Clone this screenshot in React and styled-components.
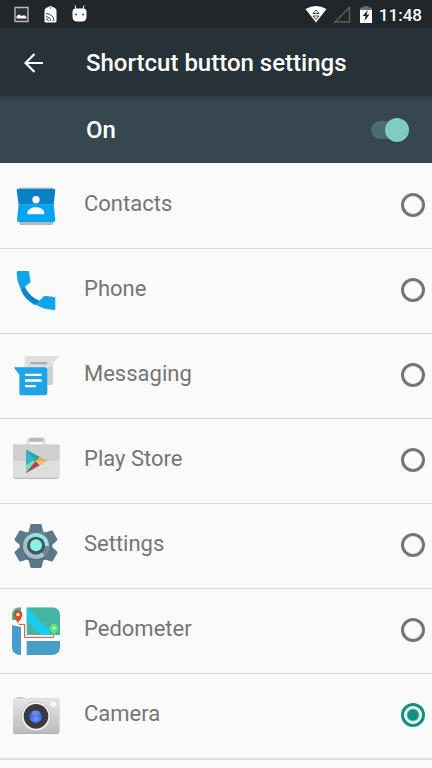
import { useState } from "react";
import styled, { createGlobalStyle } from "styled-components";

const ContactsIcon = () => (
    <svg viewBox="36 36 144 144" aria-hidden="true">
        <path d="M60 52H156L162 60H54Z" fill="#c9d2d6" />
        <path d="M58 150H160V160Q160 165 155 165H63Q58 165 58 160Z" fill="#b4b8ba" />
        <path d="M54 56H162Q166 57 166 62L161 104H56L50 62Q50 57 54 56Z" fill="#0b81c5" />
        <path d="M56 104H161L166 150Q166 156 160 156H57Q51 156 51 150Z" fill="#03a5f0" />
        <circle cx="108" cy="89" r="11" fill="#fff" />
        <path d="M82 133V128C84 106 131 106 133 128V133Z" fill="#f2fbff" />
    </svg>
)

const PhoneIcon = () => (
    <svg viewBox="36 36 144 144" aria-hidden="true">
        <path d="M54 48H84Q87 48 87 51L92 81L74 96C84 115 97 128 118 137L133 122L163 126Q166 126 166 130V162Q166 165 162 165C100 163 50 112 50 52Q50 48 54 48Z" fill="#0fa4ec" />
        <path d="M74 95C84 115 97 128 118 137L104 150C85 140 71 125 63 106Z" fill="#0b84c8" />
    </svg>
)

const MessagingIcon = () => (
    <svg viewBox="36 36 144 144" aria-hidden="true">
        <path d="M82 48H176L159 72V128Q159 135 152 135H82Q74 135 74 128V56Q74 48 82 48Z" fill="#dfdfdf" />
        <path d="M142 85L159 78V128Q159 135 152 135H142Z" fill="#cfcfcf" />
        <path d="M91 66H141V73H91Z" fill="#adadad" />
        <path d="M41 82H134Q142 82 142 90V158Q142 166 134 166H66Q58 166 58 158V104Z" fill="#1ea5e6" />
        <path d="M75 101H125V108H75ZM75 118H125V125H75ZM75 135H108V142H75Z" fill="#fff" />
    </svg>
)

const PlayStoreIcon = () => (
    <svg viewBox="36 36 144 144" aria-hidden="true">
        <path d="M80 60V48Q80 38 90 38H127Q137 38 137 48V60H129V50H88V60Z" fill="#dedede" />
        <path d="M91 38H126Q130 38 130 43V50H87V43Q87 38 91 38Z" fill="#b9b9b9" />
        <path d="M39 59H178V154Q178 162 170 162H47Q39 162 39 154Z" fill="#bdbdbd" />
        <path d="M39 59H178V152Q178 158 170 158H47Q39 158 39 152Z" fill="#dedede" />
        <path d="M39 59H178V108H39Z" fill="#cfcfcf" />
        <path d="M78 74L142 108L78 144Z" fill="#3cc6c0" />
        <path d="M78 74L119 96L107 108Z" fill="#2a9fa8" />
        <path d="M78 74L107 108L78 128Z" fill="#35b5c4" />
        <path d="M78 120L98 108L107 108L78 144Z" fill="#72dfae" />
        <path d="M78 144L107 108L119 121Z" fill="#c43b5c" />
        <path d="M119 96L142 108L107 108Z" fill="#f5a55a" />
        <path d="M107 108H142L119 121Z" fill="#fbc46a" />
    </svg>
)

const SettingsIcon = () => (
    <svg viewBox="36 36 144 144" aria-hidden="true">
        <defs>
            <linearGradient id="gear" x1="0" y1="0" x2="0" y2="1">
                <stop offset="0" stopColor="#68828f" />
                <stop offset="1" stopColor="#526d7a" />
            </linearGradient>
            <linearGradient id="ring" x1="0" y1="1" x2="1" y2="0">
                <stop offset="0.3" stopColor="#a9bac8" />
                <stop offset="0.7" stopColor="#92e8dc" />
            </linearGradient>
        </defs>
        <circle cx="108" cy="108" r="49" fill="url(#gear)" />
        {[0, 60, 120, 180, 240, 300].map((angle) => (
            <path
                key={angle}
                d="M95 42H121Q124 42 125 45L130 66H86L91 45Q92 42 95 42Z"
                fill="#5d7886"
                transform={`rotate(${angle} 108 108)`}
            />
        ))}
        <circle cx="108" cy="108" r="39" fill="url(#ring)" />
        <path d="M147 108A39 39 0 0 1 134 137L108 108Z" fill="#6d8793" />
        <circle cx="108" cy="107" r="27" fill="#40555f" />
        <circle cx="108" cy="106" r="18" fill="#8cf2e2" />
    </svg>
)

const PedometerIcon = () => (
    <svg viewBox="36 36 144 144" aria-hidden="true">
        <defs>
            <clipPath id="tile">
                <rect x="36" y="37" width="144" height="143" rx="22" />
            </clipPath>
        </defs>
        <g clipPath="url(#tile)">
            <rect x="36" y="37" width="144" height="143" fill="#fff" />
            <path d="M36 37H63V75H36ZM80 37H180V120H80Z" fill="#43b5a0" />
            <path d="M36 90L63 96V180H36ZM80 138H180V180H80Z" fill="#479fc9" />
            <path d="M80 37L100 55L118 78L150 104V120H124L80 78Z" fill="#1bcdec" />
            <path d="M56 88H74V127H161V116" fill="none" stroke="#d0453c" strokeWidth="3" />
        </g>
        <path d="M54 88C52 76 41 70 41 58A13 13 0 0 1 67 58C67 70 56 76 54 88Z" fill="#de4a1f" />
        <circle cx="54" cy="59" r="5" fill="#fff" />
        <path d="M162 124C160 114 149 109 149 99A12 12 0 0 1 174 99C174 109 164 114 162 124Z" fill="#5fe37c" />
        <circle cx="162" cy="99" r="5" fill="#c4f8cf" />
    </svg>
)

const CameraIcon = () => (
    <svg viewBox="36 36 144 144" aria-hidden="true">
        <defs>
            <linearGradient id="cameraBody" x1="0" y1="0" x2="0" y2="1">
                <stop offset="0" stopColor="#e6e6e6" />
                <stop offset="1" stopColor="#bcbcbc" />
            </linearGradient>
            <radialGradient id="lens" cx="0.5" cy="0.7" r="0.6">
                <stop offset="0" stopColor="#6f9cff" />
                <stop offset="1" stopColor="#2c56d8" />
            </radialGradient>
        </defs>
        <rect x="49" y="52" width="23" height="8" rx="4" fill="#b3b3b3" />
        <rect x="39" y="55" width="139" height="107" rx="7" fill="#aaa" />
        <rect x="39" y="55" width="139" height="105" rx="7" fill="url(#cameraBody)" />
        <circle cx="108" cy="109" r="45" fill="#c4c4c4" />
        <circle cx="108" cy="109" r="42" fill="#f4f4f4" />
        <circle cx="108" cy="109" r="37" fill="#3b3b40" />
        <circle cx="107" cy="109" r="19" fill="url(#lens)" />
        <ellipse cx="107" cy="99" rx="12" ry="7" fill="#6f86d6" />
        <circle cx="160" cy="73" r="8" fill="#fafafa" />
    </svg>
)

const apps = [
    { id: "contacts", name: "Contacts", Icon: ContactsIcon },
    { id: "phone", name: "Phone", Icon: PhoneIcon },
    { id: "messaging", name: "Messaging", Icon: MessagingIcon },
    { id: "play-store", name: "Play Store", Icon: PlayStoreIcon },
    { id: "settings", name: "Settings", Icon: SettingsIcon },
    { id: "pedometer", name: "Pedometer", Icon: PedometerIcon },
    { id: "camera", name: "Camera", Icon: CameraIcon },
]

const App = () => {
    const [ enabled, setEnabled ] = useState(true)
    const [ selected, setSelected ] = useState("camera")

    return (
        <>
            <GlobalStyle />
            <StatusBar>
                <Notifications>
                    <svg width="15" height="18" viewBox="0 0 15 18" aria-hidden="true">
                        <path d="M1 2.5H14V16.5H1Z" fill="#2b3033" stroke="#b4b6b7" strokeWidth="1.4" />
                        <path d="M2.5 13.5V11L5 9.5L8 11L10 10L12.5 12V13.5Z" fill="#fff" />
                    </svg>
                    <svg width="13" height="18" viewBox="0 0 13 18" aria-hidden="true">
                        <path d="M6.5 1L11 3Q12.5 4 12.5 6V16Q12.5 17.5 11 17.5H2Q0.5 17.5 0.5 16V6Q0.5 4 2 3Z" fill="#fff" />
                        <circle cx="6.5" cy="3" r="0.8" fill="#555" />
                        <path d="M2 8.5Q9.5 9 10 16M2 11.5Q6.5 12 7 16M2 14Q4 14 4.5 16" fill="none" stroke="#3b4043" />
                    </svg>
                    <svg width="15" height="18" viewBox="0 0 15 18" aria-hidden="true">
                        <path d="M3 0.5L4 4M12 0.5L11 4" stroke="#fff" />
                        <path d="M3 3.5H12Q14.5 4 14.5 7V12Q14 16.5 10 16.5H5Q1 16.5 0.5 12V7Q0.5 4 3 3.5Z" fill="#fff" />
                        <circle cx="4" cy="9.5" r="0.9" fill="#333" />
                        <circle cx="11" cy="9.5" r="0.9" fill="#333" />
                    </svg>
                </Notifications>
                <Signals>
                    <svg width="22" height="18" viewBox="0 0 22 18" aria-hidden="true">
                        <path d="M0.5 4Q11 -2 21.5 4L11 17.5Z" fill="#fff" />
                        <path d="M11 5L14 8.5H8ZM8 11H14L11 14.5Z" fill="none" stroke="#333" strokeWidth="0.9" />
                    </svg>
                    <svg width="19" height="18" viewBox="0 0 19 18" aria-hidden="true">
                        <path d="M1 17L15.5 2.5V17Z" fill="none" stroke="#5c6164" strokeWidth="1.4" />
                    </svg>
                    <svg width="12" height="18" viewBox="0 0 12 18" aria-hidden="true">
                        <path d="M3.5 1H8.5V2.5H12V6H0V2.5H3.5Z" fill="#696d70" />
                        <path d="M0 5H12V18H0Z" fill="#fff" />
                        <path d="M8 5L2.5 11H5.5L4.5 16L9.5 9.5H6.5Z" fill="#20262a" />
                    </svg>
                    <Clock>11:48</Clock>
                </Signals>
            </StatusBar>
            <AppBar>
                <BackButton type="button" aria-label="Back">
                    <svg width="20" height="20" viewBox="0 0 20 20" aria-hidden="true">
                        <path d="M10.5 1L1.5 10L10.5 19M1.5 10H19" fill="none" stroke="#fff" strokeWidth="2.2" />
                    </svg>
                </BackButton>
                <Title>Shortcut button settings</Title>
            </AppBar>
            <SwitchBar>
                <SwitchLabel htmlFor="enabled">{enabled ? "On" : "Off"}</SwitchLabel>
                <Switch
                    id="enabled"
                    type="checkbox"
                    role="switch"
                    checked={enabled}
                    onChange={(e) => setEnabled(e.target.checked)}
                />
            </SwitchBar>
            <List>
                {apps.map(({ id, name, Icon }) => (
                    <Row key={id}>
                        <AppIcon><Icon /></AppIcon>
                        <Label htmlFor={id}>{name}</Label>
                        <Radio
                            id={id}
                            type="radio"
                            name="shortcut"
                            value={id}
                            checked={selected === id}
                            onChange={() => setSelected(id)}
                        />
                    </Row>
                ))}
            </List>
        </>
    )
}

const GlobalStyle = createGlobalStyle`
    * {
        box-sizing: border-box;
    }
    body {
        margin: 0;
        background: #fafafa;
        font-family: Roboto, "Liberation Sans", sans-serif;
    }
    svg {
        display: block;
    }
`
const StatusBar = styled.div`
    display: flex;
    align-items: center;
    justify-content: space-between;
    height: 28px;
    padding: 0 10px 0 14px;
    background: #20262a;
`
const Notifications = styled.div`
    display: flex;
    gap: 15px;
`
const Signals = styled.div`
    display: flex;
    align-items: center;
    gap: 7px;
`
const Clock = styled.time`
    padding-top: 2px;
    color: #fff;
    font-size: 17px;
    font-weight: 500;
    line-height: 20px;
`
const AppBar = styled.header`
    display: flex;
    align-items: center;
    height: 68px;
    padding: 2px 12px 0;
    background: #263238;
`
const BackButton = styled.button`
    display: flex;
    align-items: center;
    justify-content: center;
    width: 44px;
    height: 44px;
    margin-right: 30px;
    padding: 0;
    border: 0;
    background: none;
    cursor: pointer;
`
const Title = styled.h1`
    margin: 0;
    color: #fff;
    font-size: 24px;
    font-weight: 500;
    line-height: 28px;
`
const SwitchBar = styled.div`
    display: flex;
    align-items: center;
    justify-content: space-between;
    height: 67px;
    padding: 0 23px 0 86px;
    background: linear-gradient(#303e46, #37474f 5px);
`
const SwitchLabel = styled.label`
    color: #fff;
    font-size: 24px;
    font-weight: 500;
    line-height: 28px;
`
const Switch = styled.input`
    appearance: none;
    display: flex;
    align-items: center;
    justify-content: ${({ checked }) => (checked ? "flex-end" : "flex-start")};
    width: 38px;
    height: 18px;
    margin: 0;
    border-radius: 9px;
    background: ${({ checked }) => (checked ? "#4d6c70" : "#5b686e")};
    cursor: pointer;

    &::before {
        content: "";
        flex: none;
        width: 24px;
        height: 24px;
        border-radius: 50%;
        background: ${({ checked }) => (checked ? "#80cbc4" : "#bdbdbd")};
        box-shadow: 0 1px 2px rgba(0, 0, 0, 0.2);
    }
`
const List = styled.ul`
    margin: 0;
    padding: 0;
    border-bottom: 2px solid #e0e0e0;
    list-style: none;
`
const Row = styled.li`
    display: flex;
    align-items: center;
    height: 85px;
    padding: 0 7px 0 12px;
    border-top: 1px solid #d9d9d9;

    &:first-child {
        border-top-color: transparent;
    }
`
const AppIcon = styled.span`
    width: 48px;
    height: 48px;
    margin-right: 24px;
`
const Label = styled.label`
    flex: 1;
    padding: 26px 0 30px;
    color: #757575;
    font-size: 22px;
    line-height: 26px;
`
const Radio = styled.input`
    appearance: none;
    width: 24px;
    height: 24px;
    margin: 0 0 2px;
    border: 3px solid ${({ checked }) => (checked ? "#11917f" : "#757575")};
    border-radius: 50%;
    background: ${({ checked }) => (checked ? "radial-gradient(circle, #11917f 5px, transparent 7px)" : "none")};
    cursor: pointer;
`

export default App
